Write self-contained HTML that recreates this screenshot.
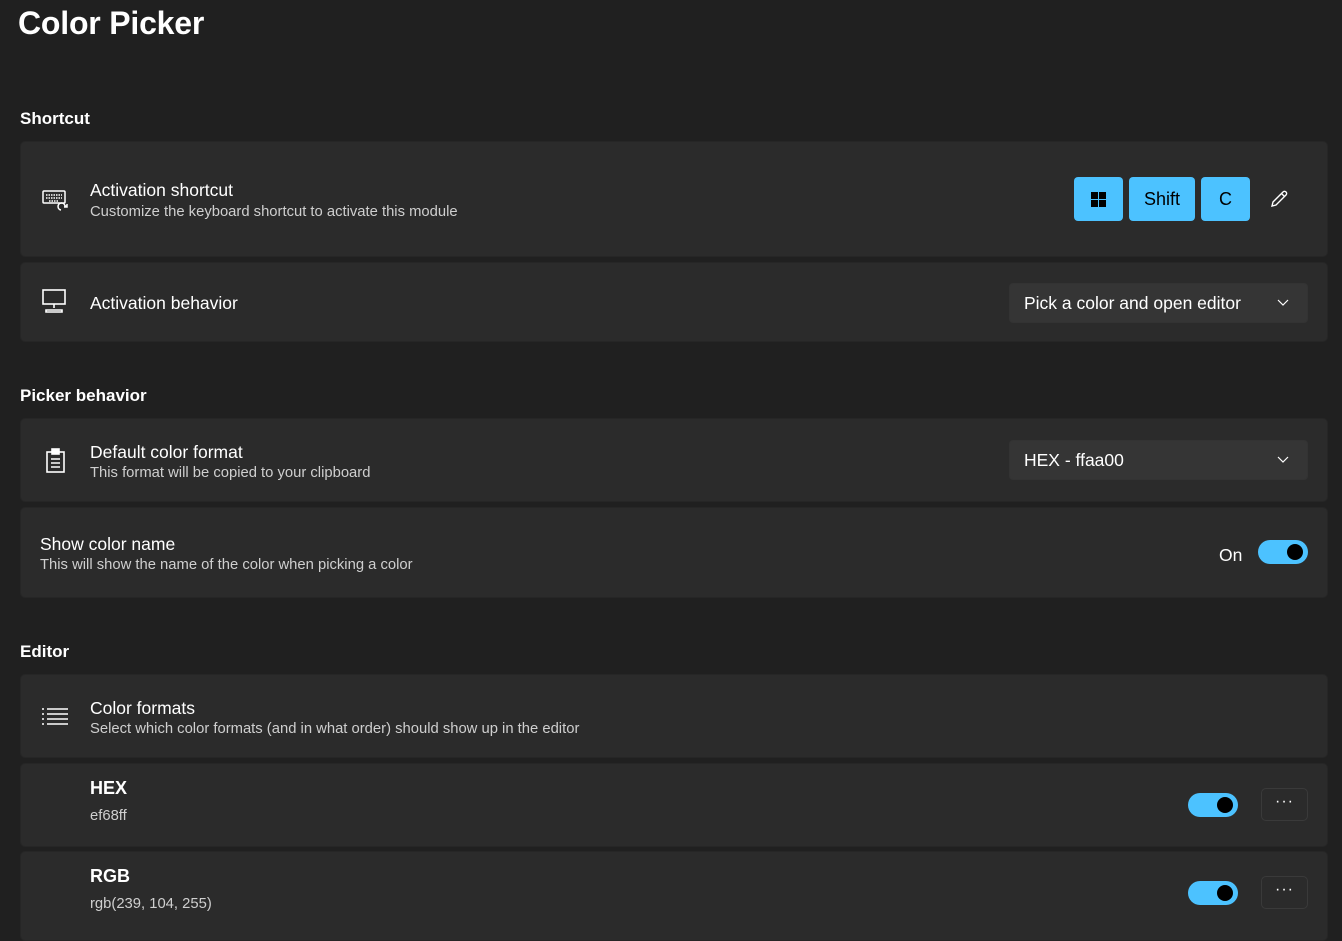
<!DOCTYPE html>
<html><head><meta charset="utf-8"><style>
*{box-sizing:border-box;margin:0;padding:0}
body{width:1342px;height:932px;overflow:hidden;background:#202020;font-family:"Liberation Sans",sans-serif;color:#fff;position:relative}
.abs{position:absolute}
h1{position:absolute;left:18px;top:5px;font-size:32px;font-weight:700;letter-spacing:-0.2px}
.sec{position:absolute;left:20px;font-size:17px;font-weight:700}
.card{position:absolute;left:20px;width:1308px;background:#2b2b2b;border-radius:5px;border:1px solid #262626}
.t{position:absolute;font-size:17.5px;color:#fff}
.d{position:absolute;font-size:14.8px;color:#cfcfcf}
.key{position:absolute;top:35px;height:44px;background:#4cc2ff;border-radius:4px;color:#000;font-size:18px;display:flex;align-items:center;justify-content:center}
.dd{position:absolute;left:988px;width:299px;height:40px;background:#353535;border-radius:4px;border:1px solid #333;font-size:17.5px;padding:9px 14px;color:#fff}
.dd svg{position:absolute;right:18px;top:15px}
.tg{position:absolute;width:50px;height:24px;border-radius:12px;background:#4cc2ff}
.tg::after{content:"";position:absolute;right:5px;top:4px;width:16px;height:16px;border-radius:50%;background:#000}
.more{position:absolute;left:1240px;width:47px;height:33px;border:1px solid #3a3a3a;border-radius:5px;text-align:center;font-size:16px;line-height:26px;letter-spacing:1px}
</style></head><body>
<h1>Color Picker</h1>
<div class="sec" style="top:109px">Shortcut</div>
<div class="card" style="top:141px;height:116px">
 <svg class="abs" style="left:20px;top:47px" width="28" height="24" viewBox="0 0 28 24" fill="none" stroke="#fff" stroke-width="1.5"><rect x="2" y="2" width="22" height="12" rx="1"/><path d="M5 6h16M5 9h16M8 12h10" stroke-dasharray="1.5 1"/><path d="M20 21a3.5 3.5 0 1 1 4-4l2 0M26 15v3h-3"/></svg>
 <div class="t" style="left:69px;top:38px">Activation shortcut</div>
 <div class="d" style="left:69px;top:62px">Customize the keyboard shortcut to activate this module</div>
 <div class="key" style="left:1053px;width:49px"><svg width="15" height="15"><rect x="0" y="0" width="7" height="7" fill="#000"/><rect x="8" y="0" width="7" height="7" fill="#000"/><rect x="0" y="8" width="7" height="7" fill="#000"/><rect x="8" y="8" width="7" height="7" fill="#000"/></svg></div>
 <div class="key" style="left:1108px;width:66px">Shift</div>
 <div class="key" style="left:1180px;width:49px">C</div>
 <svg class="abs" style="left:1248px;top:47px" width="20" height="20" viewBox="0 0 20 20" fill="none" stroke="#fff" stroke-width="1.4"><path d="M3 17l1-4L14 3a2 2 0 0 1 3 3L7 16z M12.5 4.5l3 3"/></svg>
</div>
<div class="card" style="top:262px;height:80px">
 <svg class="abs" style="left:20px;top:25px" width="28" height="26" viewBox="0 0 28 26" fill="none" stroke="#fff" stroke-width="1.6"><rect x="2" y="2" width="22" height="14"/><path d="M13 16v4M5 22h16v2H5z"/></svg>
 <div class="t" style="left:69px;top:30px">Activation behavior</div>
 <div class="dd" style="top:20px">Pick a color and open editor<svg width="12" height="8"><path d="M1 1l5 5 5-5" stroke="#fff" fill="none" stroke-width="1.2"/></svg></div>
</div>
<div class="sec" style="top:386px">Picker behavior</div>
<div class="card" style="top:418px;height:84px">
 <svg class="abs" style="left:24px;top:29px" width="22" height="26" viewBox="0 0 22 26" fill="none" stroke="#fff" stroke-width="1.6"><rect x="2" y="4" width="17" height="20"/><rect x="7" y="1" width="7" height="5" fill="#fff"/><path d="M6 11h9M6 15h9M6 19h9"/></svg>
 <div class="t" style="left:69px;top:23px">Default color format</div>
 <div class="d" style="left:69px;top:46px">This format will be copied to your clipboard</div>
 <div class="dd" style="top:21px">HEX - ffaa00<svg width="12" height="8"><path d="M1 1l5 5 5-5" stroke="#fff" fill="none" stroke-width="1.2"/></svg></div>
</div>
<div class="card" style="top:507px;height:91px">
 <div class="t" style="left:19px;top:26px">Show color name</div>
 <div class="d" style="left:19px;top:49px">This will show the name of the color when picking a color</div>
 <div class="t" style="left:1198px;top:37px">On</div>
 <div class="tg" style="left:1237px;top:32px"></div>
</div>
<div class="sec" style="top:642px">Editor</div>
<div class="card" style="top:674px;height:84px">
 <svg class="abs" style="left:21px;top:32px" width="27" height="18" viewBox="0 0 27 18" stroke="#fff" stroke-width="1.6"><path d="M0 2h2M5 2h21M0 7h2M5 7h21M0 12h2M5 12h21M0 17h2M5 17h21"/></svg>
 <div class="t" style="left:69px;top:23px">Color formats</div>
 <div class="d" style="left:69px;top:46px">Select which color formats (and in what order) should show up in the editor</div>
</div>
<div class="card" style="top:763px;height:84px">
 <div class="t" style="left:69px;top:14px;font-weight:700;font-size:18px">HEX</div>
 <div class="d" style="left:69px;top:44px">ef68ff</div>
 <div class="tg" style="left:1167px;top:29px"></div>
 <div class="more" style="top:24px">···</div>
</div>
<div class="card" style="top:851px;height:90px">
 <div class="t" style="left:69px;top:14px;font-weight:700;font-size:18px">RGB</div>
 <div class="d" style="left:69px;top:44px">rgb(239, 104, 255)</div>
 <div class="tg" style="left:1167px;top:29px"></div>
 <div class="more" style="top:24px">···</div>
</div>
</body></html>
